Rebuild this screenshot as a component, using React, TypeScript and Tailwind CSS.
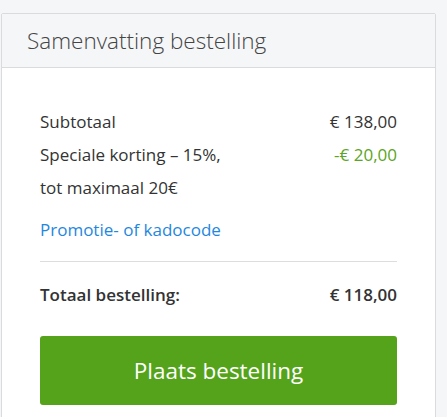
import React from "react";

const App: React.FC = () => {
  return (
    <div className="min-h-screen bg-[#f5f6f8] pt-[13px] pl-[1px] font-['Open_Sans',sans-serif] text-[#333]">
      <div className="w-[435px] border border-[#dadbdd] rounded-t-[2px] bg-white">
        <div className="h-[54px] bg-[#f5f6f8] border-b border-[#dadbdd] flex items-center px-[25px]">
          <h2 className="text-[22.5px] font-light text-[#444]">Samenvatting bestelling</h2>
        </div>
        <div className="px-[38px] pt-[38px] pb-[12px]">
          <div className="flex justify-between text-[17px] leading-[32px]">
            <span>Subtotaal</span>
            <span>€ 138,00</span>
          </div>
          <div className="flex justify-between text-[17px] leading-[33px]">
            <span>
              Speciale korting – 15%,
              <br />
              tot maximaal 20€
            </span>
            <span className="text-[#5aa524]">-€ 20,00</span>
          </div>
          <div className="mt-[10px] text-[17px] leading-[32px]">
            <a href="#" className="text-[#1f87e0]">
              Promotie- of kadocode
            </a>
          </div>
          <hr className="mt-[15px] border-t border-[#dddddd]" />
          <div className="mt-[17px] flex justify-between text-[17px] leading-[32px] font-semibold">
            <span>Totaal bestelling:</span>
            <span>€ 118,00</span>
          </div>
          <button className="mt-[25px] w-full h-[69px] rounded-[3px] bg-[#54a31b] text-white text-[22.5px]">
            Plaats bestelling
          </button>
        </div>
      </div>
    </div>
  );
};

export default App;
